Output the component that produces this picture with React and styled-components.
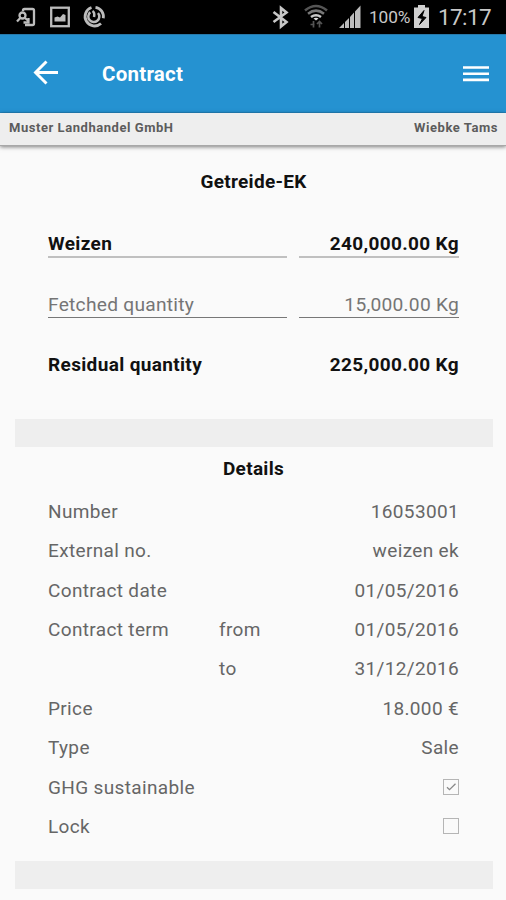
import React from "react";
import styled, { createGlobalStyle } from "styled-components";

const GlobalStyle = createGlobalStyle`
  * { box-sizing: border-box; }
  body { margin: 0; background: #fafafa; font-family: Roboto, sans-serif; }
`;

const Screen = styled.div`
  width: 506px;
  height: 900px;
  overflow: hidden;
  display: flex;
  flex-direction: column;
  background: #fafafa;
`;

const StatusBar = styled.div`
  height: 34px;
  flex: none;
  background: #000;
  display: flex;
  justify-content: space-between;
`;

const StatusIcons = styled.svg`
  display: block;
  width: ${(p) => p.$width}px;
  height: 34px;
  flex: none;
`;

const StatusRight = styled.div`
  display: flex;
  align-items: center;
  color: #c8c8c8;
  line-height: 34px;
  white-space: nowrap;
`;

const Battery = styled.span`
  width: 43px;
  font-size: 17.3px;
  line-height: 36px;
  letter-spacing: -0.1px;
`;

const Clock = styled.span`
  width: 74px;
  padding-left: 6px;
  font-size: 22.5px;
  line-height: 37px;
  letter-spacing: -0.6px;
`;

const AppBar = styled.header`
  height: 79px;
  flex: none;
  background: #2592d1;
  border-top: 1px solid #2779aa;
  border-bottom: 1px solid #2385bf;
  padding: 0 17px 2px 32px;
  display: flex;
  align-items: center;
`;

const Icon = styled.svg`
  width: 27px;
  height: 28px;
  flex: none;
  fill: none;
  stroke: #fff;
`;

const Title = styled.h1`
  margin: 2px 0 0 43px;
  flex: 1;
  color: #fff;
  font-size: 20.5px;
  line-height: 24px;
  font-weight: 700;
  letter-spacing: 0.25px;
`;

const UserBar = styled.div`
  height: 33px;
  flex: none;
  display: flex;
  justify-content: space-between;
  padding: 0 8px 0 9px;
  background: #eee;
  border-bottom: 1px solid #a8a8a8;
  box-shadow: 0 1px 4px rgba(0, 0, 0, 0.5);
  color: #5c5c5c;
  font-size: 13px;
  font-weight: 700;
  line-height: 30px;
  letter-spacing: 0.55px;
`;

const Heading = styled.h2`
  margin: ${(p) => p.$top}px 0 0;
  padding-left: 1px;
  font-size: 19px;
  line-height: 24px;
  font-weight: 700;
  letter-spacing: 0.3px;
  text-align: center;
  color: #111;
`;

const Quantities = styled.section`
  margin: 36px 47px 0 48px;
  display: grid;
  grid-template-columns: 239px 160px;
  column-gap: 12px;
  grid-template-rows: 61px 60px 30px;
`;

const Quantity = styled.div`
  height: ${(p) => (p.$thin ? 27 : 28)}px;
  line-height: 27px;
  white-space: nowrap;
  font-size: ${(p) => (p.$bold ? 19 : 19.2)}px;
  font-weight: ${(p) => (p.$bold ? 700 : 400)};
  color: ${(p) => (p.$bold ? "#111" : "#757575")};
  text-align: ${(p) => (p.$right ? "right" : "left")};
  letter-spacing: ${(p) => (p.$bold ? 0.35 : 0.25)}px;
  border-bottom: ${(p) => p.$line || "none"};
`;

const Band = styled.div`
  height: 28px;
  flex: none;
  margin: ${(p) => p.$top}px 13px 0 15px;
  background: #eee;
`;

const Details = styled.section`
  margin: 10.600px 47px 0 48px;
  display: grid;
  grid-auto-rows: 39.4px;
`;

const DetailRow = styled.div`
  display: grid;
  grid-template-columns: 171px 80px 1fr;
  align-items: center;
  color: #666;
  font-size: 19px;
  letter-spacing: 0.35px;
  white-space: nowrap;
`;

const Value = styled.span`
  justify-self: end;
`;

const CheckBox = styled.svg`
  display: block;
  width: 16px;
  height: 17px;
  justify-self: end;
  fill: none;
  stroke: #b5b5b5;
`;

const LINES = { strong: "2px solid #c0c0c0", thin: "1px solid #777" };

const ROWS = [
  ["Number", "", "16053001"],
  ["External no.", "", "weizen ek"],
  ["Contract date", "", "01/05/2016"],
  ["Contract term", "from", "01/05/2016"],
  ["", "to", "31/12/2016"],
  ["Price", "", "18.000 €"],
  ["Type", "", "Sale"],
  ["GHG sustainable", "", true],
  ["Lock", "", false],
];

function Check({ checked }) {
  return (
    <CheckBox viewBox="0 0 16 17">
      <rect x="0.5" y="0.5" width="15" height="15" />
      {checked && <path d="M4 8.200l2.500 2.500 6-6" stroke="#888" strokeWidth="1.300" />}
    </CheckBox>
  );
}

function LeftStatus() {
  return (
    <StatusIcons $width={120} viewBox="0 0 120 34" fill="none" stroke="#bcbcbc" strokeWidth="2.300">
      <path d="M23 11V10.500q0-1.500 1.500-1.500h8q1.500 0 1.500 1.500v13q0 1.500-1.500 1.500H25" />
      <circle cx="22.500" cy="15.500" r="3" />
      <path d="M20.500 17.800l-3.500 3.700M25 18l3.500 3M28.500 18v4.500h-5" />
      <rect x="51.200" y="7.700" width="17.600" height="18.500" />
      <path d="M54.500 21.500v-4l3-1 2.500 1 3-3.500 2.500 1v6.500z" fill="#bcbcbc" stroke="none" />
      <path d="M91.500 7.500A9.500 9.500 0 1 0 101 23.500M95.500 7.300a9.500 9.500 0 0 1 7.800 11" strokeWidth="2.800" />
      <path d="M90.300 12.300a5.500 5.500 0 1 0 7.700.7M92.500 11q2.500 1.500 1.500 6" strokeWidth="2.500" />
    </StatusIcons>
  );
}

function SignalIcons() {
  return (
    <StatusIcons $width={98} viewBox="271 0 98 34" fill="none" stroke="#c8c8c8" strokeWidth="2.600">
      <path d="M273.500 12l13 10-5.500 4.500V8l5.500 4.500-13 9.500" />
      <path d="M305 10.500q11-9 22 0" stroke="#555" />
      <path d="M308 13.700q8-6 16 0" stroke="#777" />
      <path d="M311 17q5-3.500 10 0" />
      <path d="M313.500 18.500q2.500-1.500 5 0l-2.500 2z" fill="#ddd" stroke="none" />
      <path d="M313.500 21v6.500M310.500 24.500h4M319.500 21v6.500M317 24l2.500-2.500 2.500 2.500" stroke="#555" strokeWidth="1.700" />
      <path d="M339 28l5-5v5zM345 22l4-4v10h-4zM350 17l4-4.500V28h-4zM355 11.500l5.500-6V28H355z" fill="#bcbcbc" stroke="none" />
    </StatusIcons>
  );
}

export default function App() {
  return (
    <>
      <GlobalStyle />
      <Screen>
        <StatusBar>
          <LeftStatus />
          <StatusRight>
            <SignalIcons />
            <Battery>100%</Battery>
            <StatusIcons $width={20} viewBox="412 0 20 34">
              <path d="M414 7.500h4V5h7v2.500h4V28h-15z" fill="#d0d0d0" />
              <path d="M424 10.500l-6 7 4.500 1-3 6 6.500-7-4-1z" fill="#000" stroke="#000" />
            </StatusIcons>
            <Clock>17:17</Clock>
          </StatusRight>
        </StatusBar>
        <AppBar>
          <Icon viewBox="0 0 27 28" strokeWidth="2.900">
            <path d="M26 13.500H4M14.500 2.500L3.500 13.500l11 11" />
          </Icon>
          <Title>Contract</Title>
          <Icon viewBox="0 0 27 28" strokeWidth="2.600">
            <path d="M1 8.500h26M1 14.700h26M1 20.900h26" />
          </Icon>
        </AppBar>
        <UserBar>
          <span>Muster Landhandel GmbH</span>
          <span>Wiebke Tams</span>
        </UserBar>
        <Heading $top={24}>Getreide-EK</Heading>
        <Quantities>
          <Quantity $bold $line={LINES.strong}>Weizen</Quantity>
          <Quantity $bold $right $line={LINES.strong}>240,000.00 Kg</Quantity>
          <Quantity $thin $line={LINES.thin}>Fetched quantity</Quantity>
          <Quantity $thin $right $line={LINES.thin}>15,000.00 Kg</Quantity>
          <Quantity $bold>Residual quantity</Quantity>
          <Quantity $bold $right>225,000.00 Kg</Quantity>
        </Quantities>
        <Band $top={38} />
        <Heading $top={10}>Details</Heading>
        <Details>
          {ROWS.map(([label, detail, value], i) => (
            <DetailRow key={i}>
              <span>{label}</span>
              <span>{detail}</span>
              {typeof value === "boolean" ? <Check checked={value} /> : <Value>{value}</Value>}
            </DetailRow>
          ))}
        </Details>
        <Band $top={14.400} />
      </Screen>
    </>
  );
}
